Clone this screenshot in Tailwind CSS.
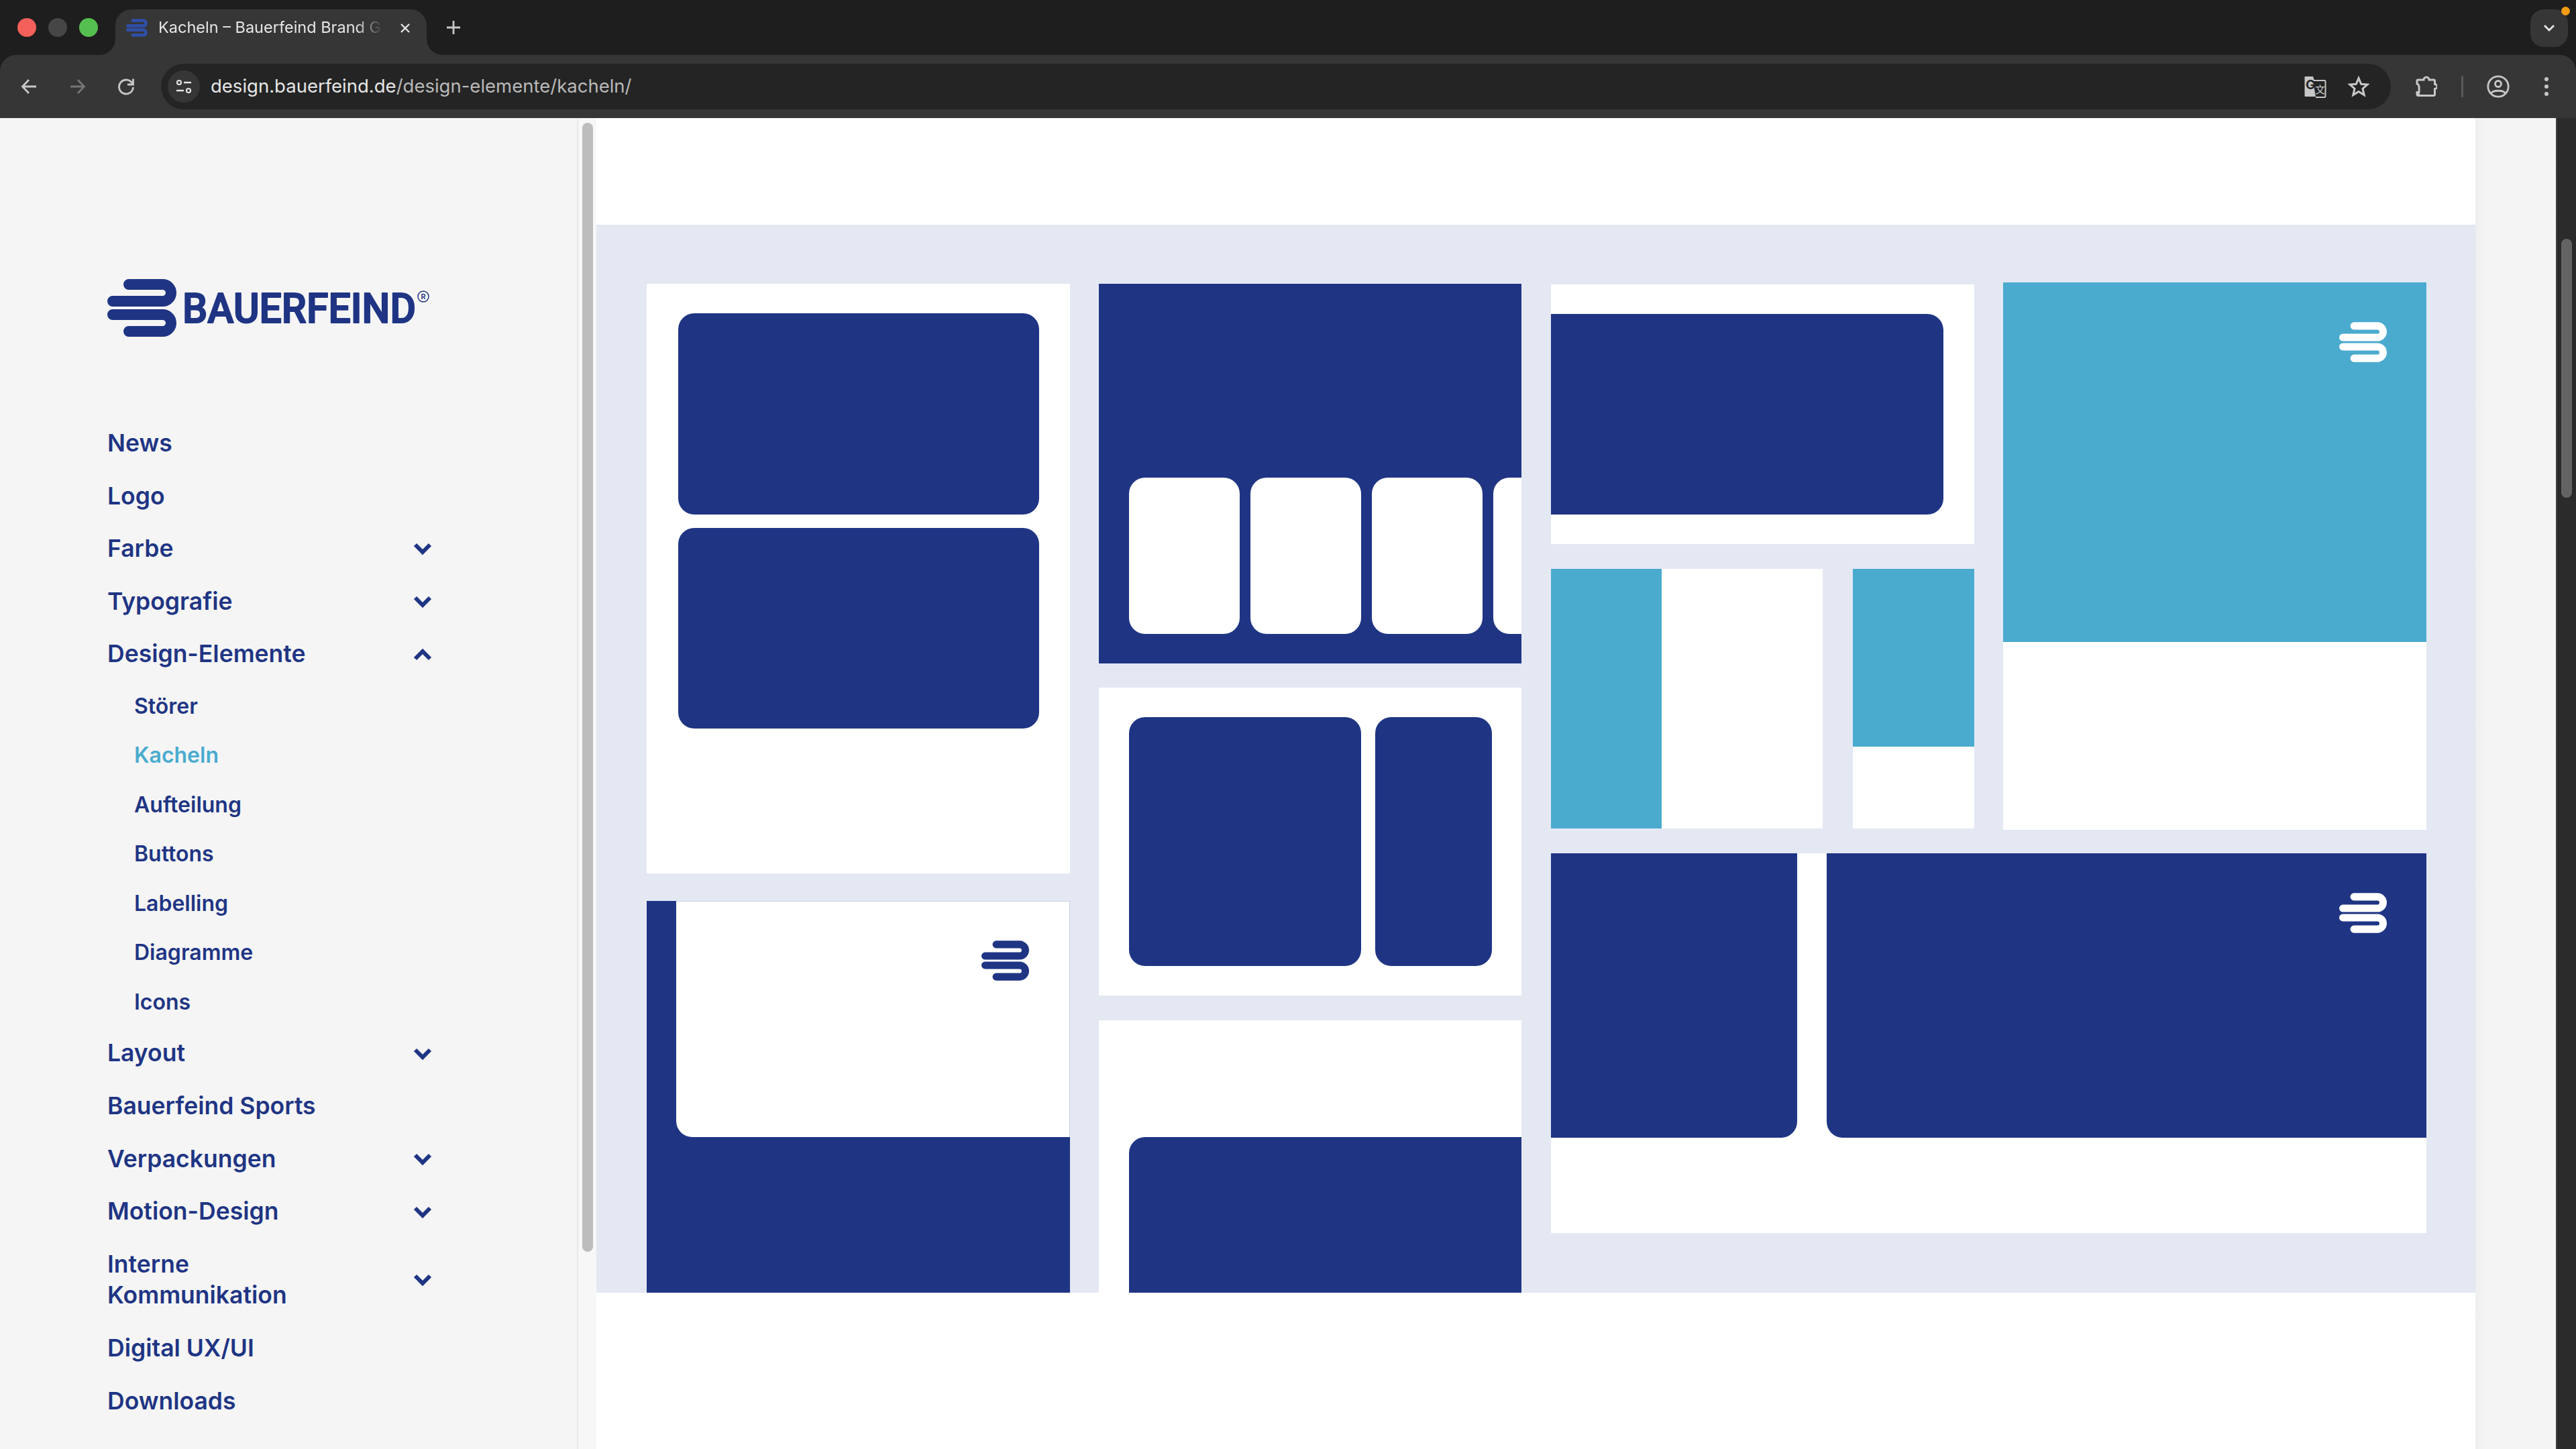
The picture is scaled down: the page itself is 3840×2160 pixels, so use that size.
<!DOCTYPE html>
<html lang="de">
<head>
  <meta charset="UTF-8">
  <title>Kacheln – Bauerfeind Brand Guide</title>
  <script src="https://cdn.jsdelivr.net/npm/@tailwindcss/browser@4"></script>
</head>
<body class="w-[3840px] h-[2160px] overflow-hidden bg-white font-['Inter',sans-serif]">
  <!-- shared shapes -->
  <svg class="hidden">
    <symbol id="mark" viewBox="0 0 103 86">
      <path d="M32 8H82.5A12.5 12.5 0 0 1 82.5 33H8M8 53H82.5A12.5 12.5 0 0 1 82.5 78H32" fill="none" stroke="currentColor" stroke-width="16" stroke-linecap="round"/>
    </symbol>
    <symbol id="chev" viewBox="0 0 28 18">
      <path d="M3 3L14 14L25 3" fill="none" stroke="currentColor" stroke-width="6"/>
    </symbol>
  </svg>

  <!-- browser chrome -->
  <header class="h-[176px] bg-[#1e1e1e] flex flex-col">
    <div class="h-[82px] flex items-start relative">
      <div class="flex gap-[18px] pl-[26px] pt-[27px] w-[172px]">
        <span class="w-[28px] h-[28px] rounded-full bg-[#f5605a]"></span>
        <span class="w-[28px] h-[28px] rounded-full bg-[#464646]"></span>
        <span class="w-[28px] h-[28px] rounded-full bg-[#55c050]"></span>
      </div>
      <div class="relative mt-[14px] w-[464px] h-[68px] bg-[#363636] rounded-t-[24px] flex items-center pl-[16px] pb-[14px] text-[#e6e6e6]">
        <svg class="absolute left-[-24px] bottom-0 w-[24px] h-[24px]" viewBox="0 0 24 24"><path d="M0 24A24 24 0 0 0 24 0V24Z" fill="#363636"/></svg>
        <svg class="absolute right-[-24px] bottom-0 w-[24px] h-[24px]" viewBox="0 0 24 24"><path d="M24 24A24 24 0 0 1 0 0V24Z" fill="#363636"/></svg>
        <svg class="w-[32px] h-[27px] text-[#2f4ea5] shrink-0"><use href="#mark"/></svg>
        <span class="ml-[16px] w-[334px] overflow-hidden whitespace-nowrap text-[23.500px] [mask-image:linear-gradient(to_right,black_88%,transparent)]">Kacheln – Bauerfeind Brand Guide</span>
        <svg class="absolute left-[423px] top-[19px] w-[18px] h-[18px]" viewBox="0 0 18 18"><path d="M3 3L15 15M15 3L3 15" stroke="#e6e6e6" stroke-width="2.4"/></svg>
      </div>
      <svg class="ml-[28px] mt-[29px] w-[24px] h-[24px]" viewBox="0 0 24 24"><path d="M12 2V22M2 12H22" stroke="#c7c7c7" stroke-width="2.8"/></svg>
      <div class="absolute left-[3772px] top-[14px] w-[56px] h-[56px] rounded-[20px] bg-[#363636] flex items-center justify-center">
        <svg class="w-[18px] h-[12px]" viewBox="0 0 18 12"><path d="M2 2L9 9L16 2" fill="none" stroke="#e6e6e6" stroke-width="2.8"/></svg>
        <span class="absolute right-[-3px] top-[-4px] w-[13px] h-[13px] rounded-full bg-[#f29b13]"></span>
      </div>
    </div>
    <div class="h-[94px] bg-[#363636] rounded-t-[24px] flex items-center">
      <svg class="ml-[31px] w-[24px] h-[24px]" viewBox="0 0 24 24"><path d="M23 12H3M12 2L2.500 12L12 22" fill="none" stroke="#c7c7c7" stroke-width="2.800"/></svg>
      <svg class="ml-[49px] w-[24px] h-[24px]" viewBox="0 0 24 24"><path d="M1 12H21M12 2L21.500 12L12 22" fill="none" stroke="#757575" stroke-width="2.800"/></svg>
      <svg class="ml-[47px] w-[26px] h-[26px]" viewBox="0 0 26 26"><path d="M22.500 9A10.500 10.500 0 1 0 23.500 14" fill="none" stroke="#c7c7c7" stroke-width="2.800"/><path d="M23.500 1.500V10H15" fill="none" stroke="#c7c7c7" stroke-width="2.800"/></svg>
      <!-- omnibox -->
      <div class="ml-[39px] w-[3324px] h-[68px] rounded-full bg-[#242424] flex items-center relative">
        <div class="ml-[10px] w-[48px] h-[48px] rounded-full bg-[#363636] flex items-center justify-center">
          <svg class="w-[24px] h-[22px]" viewBox="0 0 24 22"><circle cx="5" cy="5" r="3" fill="none" stroke="#e3e3e3" stroke-width="2.200"/><path d="M12 5H23M1 17H12" stroke="#e3e3e3" stroke-width="2.400"/><circle cx="19" cy="17" r="3" fill="none" stroke="#e3e3e3" stroke-width="2.200"/></svg>
        </div>
        <span class="ml-[16px] text-[27.500px] text-[#b9b9b9] whitespace-nowrap"><span class="text-[#e6e6e6]">design.bauerfeind.de</span>/design-elemente/kacheln/</span>
        <svg class="absolute left-[3194px] top-[17px] w-[34px] h-[34px]" viewBox="0 0 34 34">
          <path d="M2 2H14L24 32H3A1.500 1.500 0 0 1 1.500 30V3Z" fill="#c7c7c7"/>
          <path d="M14 8H31A1.500 1.500 0 0 1 32.500 9.500V32A1.500 1.500 0 0 1 31 33H18" fill="#242424" stroke="#c7c7c7" stroke-width="2"/>
          <text x="3" y="21" font-size="19" font-weight="700" fill="#242424" font-family="Inter, sans-serif">G</text>
          <text x="17" y="27" font-size="15" fill="#c7c7c7" font-family="'Noto Sans CJK SC', sans-serif">文</text>
        </svg>
        <svg class="absolute left-[3260px] top-[18px] w-[32px] h-[32px]" viewBox="0 0 32 32"><path d="M16 3.500L19.700 12.300L29.200 13L22 19.200L24.200 28.500L16 23.500L7.800 28.500L10 19.200L2.800 13L12.300 12.300Z" fill="none" stroke="#c7c7c7" stroke-width="3"/></svg>
      </div>
      <svg class="ml-[37px] w-[32px] h-[32px]" viewBox="0 0 32 32"><path d="M3.500 6H12A4 4 0 0 1 20 6H27A1.500 1.500 0 0 1 28.500 7.500V12.500A3.500 3.500 0 0 1 28.500 19.500V28A1.500 1.500 0 0 1 27 29.500H3.500A1.500 1.500 0 0 1 2 28V23A1 5 0 0 0 5 18A3 5 0 0 0 2 12V7.500A1.500 1.500 0 0 1 3.500 6Z" fill="none" stroke="#c7c7c7" stroke-width="3"/></svg>
      <span class="ml-[36px] w-[3px] h-[32px] rounded-full bg-[#5a5a5a]"></span>
      <svg class="ml-[35px] w-[34px] h-[34px]" viewBox="0 0 34 34"><circle cx="17" cy="17" r="15.200" fill="none" stroke="#c7c7c7" stroke-width="2.800"/><circle cx="17" cy="13" r="4.500" fill="none" stroke="#c7c7c7" stroke-width="2.800"/><path d="M6 27C10 22 24 22 28 27" fill="none" stroke="#c7c7c7" stroke-width="2.800"/></svg>
      <svg class="ml-[51px] w-[8px] h-[32px]" viewBox="0 0 8 32"><circle cx="4" cy="5" r="3" fill="#c7c7c7"/><circle cx="4" cy="16" r="3" fill="#c7c7c7"/><circle cx="4" cy="27" r="3" fill="#c7c7c7"/></svg>
    </div>
  </header>

  <div class="flex h-[1984px]">
    <!-- sidebar -->
    <aside class="w-[862px] shrink-0 bg-[#f5f5f5] border-r-2 border-[#e8e8e8] pl-[160px] pr-[216px] text-[#1f3584] font-semibold">
      <div class="pt-[240px] h-[446px] flex items-start">
        <svg class="w-[103px] h-[86px] shrink-0"><use href="#mark"/></svg>
        <svg class="ml-[8px] mt-[1px] w-[370px] h-[80px]" viewBox="0 0 370 80">
          <text x="1" y="64" textLength="348" lengthAdjust="spacingAndGlyphs" font-size="62" font-weight="500" fill="currentColor" stroke="currentColor" stroke-width="2" stroke-linejoin="round" font-family="Roboto, sans-serif">BAUERFEIND</text>
          <circle cx="360" cy="25" r="8" fill="none" stroke="currentColor" stroke-width="1.500"/>
          <text x="360" y="29" text-anchor="middle" font-size="11" fill="currentColor" font-family="Roboto, sans-serif">R</text>
        </svg>
      </div>
      <nav class="text-[35.500px] leading-[46.600px]">
        <a class="block py-4">News</a>
        <a class="block py-4">Logo</a>
        <a class="py-4 flex items-center justify-between">Farbe<svg class="w-[28px] h-[18px]"><use href="#chev"/></svg></a>
        <a class="py-4 flex items-center justify-between">Typografie<svg class="w-[28px] h-[18px]"><use href="#chev"/></svg></a>
        <a class="py-4 flex items-center justify-between">Design-Elemente<svg class="w-[28px] h-[18px] rotate-180"><use href="#chev"/></svg></a>
        <div class="pl-[40px] text-[32px] leading-[41.500px] mt-[1px] pb-[1px]">
          <a class="block py-4">Störer</a>
          <a class="block py-4 text-[#4aabcf]">Kacheln</a>
          <a class="block py-4">Aufteilung</a>
          <a class="block py-4">Buttons</a>
          <a class="block py-4">Labelling</a>
          <a class="block py-4">Diagramme</a>
          <a class="block py-4">Icons</a>
        </div>
        <a class="py-4 flex items-center justify-between">Layout<svg class="w-[28px] h-[18px]"><use href="#chev"/></svg></a>
        <a class="block py-4">Bauerfeind Sports</a>
        <a class="py-4 flex items-center justify-between">Verpackungen<svg class="w-[28px] h-[18px]"><use href="#chev"/></svg></a>
        <a class="py-4 flex items-center justify-between">Motion-Design<svg class="w-[28px] h-[18px]"><use href="#chev"/></svg></a>
        <a class="py-4 flex items-center justify-between"><span>Interne<br>Kommunikation</span><svg class="w-[28px] h-[18px]"><use href="#chev"/></svg></a>
        <a class="block py-4">Digital UX/UI</a>
        <a class="block py-4">Downloads</a>
      </nav>
    </aside>

    <!-- sidebar scrollbar -->
    <div class="w-[27px] shrink-0 bg-[#f7f7f7] pt-[7px] pl-[6px]">
      <div class="w-[16px] h-[1683px] rounded-full bg-[#bdbdbd]"></div>
    </div>

    <!-- main column -->
    <main class="w-[2801px] shrink-0 bg-white">
      <div class="h-[159px]"></div>
      <section class="h-[1592px] bg-[#e4e8f3] overflow-hidden flex pl-[75px] pt-[88px]">
        <!-- column 1 -->
        <div class="w-[631px] shrink-0 flex flex-col">
          <div class="h-[879px] bg-white pt-[44px] pl-[47px] pr-[46px] flex flex-col gap-[20px]">
            <div class="h-[300px] rounded-[24px] bg-[#1f3584]"></div>
            <div class="h-[299px] rounded-[24px] bg-[#1f3584]"></div>
          </div>
          <div class="mt-[41px] h-[584px] bg-[#1f3584] pl-[44px] flex flex-col">
            <div class="relative h-[352px] bg-white rounded-bl-[24px] border-t border-r border-[#ccd2e6]">
              <svg class="absolute left-[455px] top-[58px] w-[71px] h-[60px] text-[#1f3584]"><use href="#mark"/></svg>
            </div>
          </div>
        </div>
        <!-- column 2 -->
        <div class="ml-[43px] w-[630px] shrink-0 flex flex-col">
          <div class="h-[566px] bg-[#1f3584] overflow-hidden pt-[289px] pl-[45px] flex gap-[16px]">
            <div class="w-[165px] h-[233px] shrink-0 rounded-[24px] bg-white"></div>
            <div class="w-[165px] h-[233px] shrink-0 rounded-[24px] bg-white"></div>
            <div class="w-[165px] h-[233px] shrink-0 rounded-[24px] bg-white"></div>
            <div class="w-[165px] h-[233px] shrink-0 rounded-[24px] bg-white"></div>
          </div>
          <div class="mt-[36px] h-[459px] bg-white pt-[44px] pl-[45px] flex gap-[21px]">
            <div class="w-[346px] h-[371px] rounded-[24px] bg-[#1f3584]"></div>
            <div class="w-[174px] h-[371px] rounded-[24px] bg-[#1f3584]"></div>
          </div>
          <div class="mt-[37px] h-[406px] bg-white pl-[45px] pt-[174px]">
            <div class="h-[232px] rounded-tl-[24px] bg-[#1f3584]"></div>
          </div>
        </div>
        <!-- columns 3 and 4 -->
        <div class="ml-[44px] w-[1305px] shrink-0 flex flex-col">
          <div class="flex gap-[43px] h-[816px] -mt-[2px]">
            <div class="w-[631px] pt-[3px] flex flex-col">
              <div class="h-[387px] bg-white pt-[44px]">
                <div class="w-[585px] h-[299px] rounded-r-[24px] bg-[#1f3584]"></div>
              </div>
              <div class="mt-[37px] flex gap-[45px] h-[387px]">
                <div class="w-[405px] bg-white">
                  <div class="w-[165px] h-full bg-[#4aabcf]"></div>
                </div>
                <div class="w-[181px] bg-white">
                  <div class="h-[265px] bg-[#4aabcf]"></div>
                </div>
              </div>
            </div>
            <div class="relative w-[631px] bg-white">
              <div class="h-[536px] bg-[#4aabcf]"></div>
              <svg class="absolute left-[501px] top-[59px] w-[71px] h-[60px] text-white"><use href="#mark"/></svg>
            </div>
          </div>
          <div class="relative mt-[35px] h-[566px] bg-white flex gap-[44px]">
            <div class="w-[367px] h-[424px] rounded-br-[24px] bg-[#1f3584]"></div>
            <div class="w-[894px] h-[424px] rounded-bl-[24px] bg-[#1f3584]"></div>
            <svg class="absolute left-[1175px] top-[59px] w-[71px] h-[60px] text-white"><use href="#mark"/></svg>
          </div>
        </div>
      </section>
    </main>

    <!-- page gutter and browser scrollbar -->
    <div class="w-[120px] shrink-0 bg-gradient-to-r from-[#eeeeee] to-[#f4f4f4] to-[12%]"></div>
    <div class="w-[30px] shrink-0 bg-[#2b2b2b] border-l-2 border-[#3f3f3f] pt-[180px] pl-[6px]">
      <div class="w-[16px] h-[386px] rounded-full bg-[#636363]"></div>
    </div>
  </div>
</body>
</html>
